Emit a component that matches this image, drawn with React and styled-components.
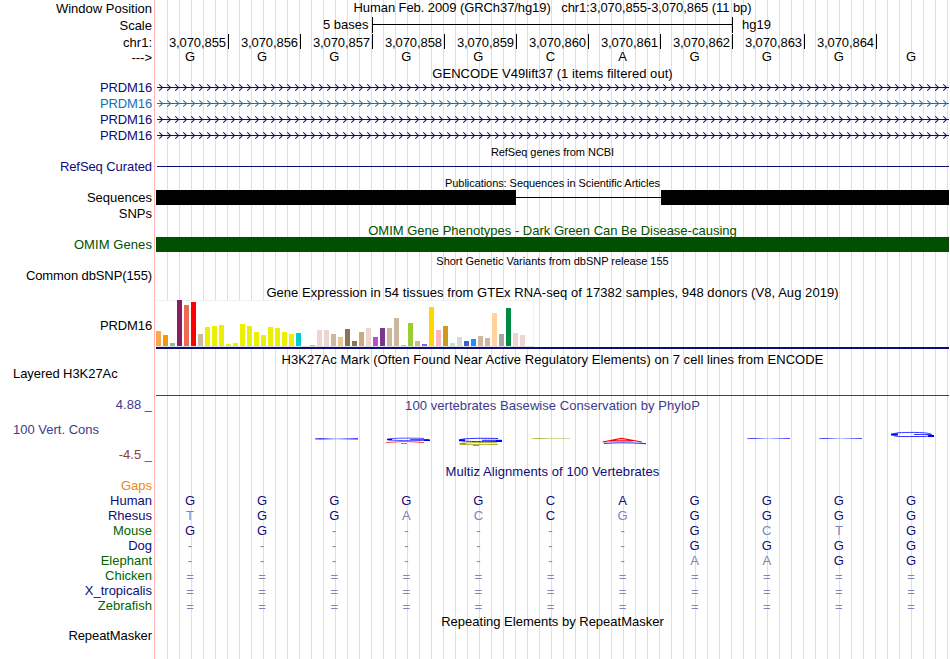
import React from 'react';
import styled, { createGlobalStyle } from 'styled-components';

const NAVY = '#0c0c78';
const BLUE = '#1470b4';
const GREEN = '#005000';
const SLATE = '#3c3c8c';

const positions = [855, 856, 857, 858, 859, 860, 861, 862, 863, 864];

const genes = [
    { name: 'PRDM16', color: NAVY },
    { name: 'PRDM16', color: BLUE },
    { name: 'PRDM16', color: NAVY },
    { name: 'PRDM16', color: NAVY },
];

// [color, height] for every GTEx tissue, in track order
const tissues = [
    ['#ffa54f', 15], ['#ee9a00', 11], ['#8fbc8f', 3], ['#8b1c62', 46],
    ['#ee6a50', 41], ['#ff0000', 44], ['#cdb79e', 12], ['#eeee00', 19],
    ['#eeee00', 20], ['#eeee00', 21], ['#eeee00', 2], ['#eeee00', 3],
    ['#eeee00', 22], ['#eeee00', 20], ['#eeee00', 14], ['#eeee00', 11],
    ['#eeee00', 19], ['#eeee00', 18], ['#eeee00', 14], ['#eeee00', 12],
    ['#00cdcd', 13], ['#ee82ee', 0], ['#9ac0cd', 1], ['#eed5d2', 16],
    ['#eed5d2', 16], ['#cdb79e', 12], ['#eec591', 9], ['#8b7355', 17],
    ['#8b7355', 5], ['#cdaa7d', 14], ['#eed5d2', 18], ['#b452cd', 9],
    ['#7a378b', 18], ['#cdb79e', 18], ['#cdb79e', 28], ['#cdb79e', 1],
    ['#9acd32', 23], ['#cdb79e', 5], ['#7a67ee', 2], ['#ffd700', 39],
    ['#ffb6c1', 16], ['#cd9b1d', 20], ['#b4eeb4', 3], ['#d9d9d9', 9],
    ['#3a5fcd', 5], ['#1e90ff', 7], ['#cdb79e', 10], ['#cdb79e', 8],
    ['#ffd39b', 33], ['#a6a6a6', 12], ['#008b45', 38], ['#eed5d2', 13],
    ['#eed5d2', 11], ['#ff00ff', 0],
];

// lower case marks a base that differs from human and is drawn faint
const species = [
    { name: 'Human', color: NAVY, bases: 'GGGGGCAGGGG' },
    { name: 'Rhesus', color: NAVY, bases: 'tGGacCgGGGG' },
    { name: 'Mouse', color: '#006400', bases: 'GG-----GctG' },
    { name: 'Dog', color: NAVY, bases: '-------GGGG' },
    { name: 'Elephant', color: '#006400', bases: '-------aaGG' },
    { name: 'Chicken', color: '#006400', bases: '===========' },
    { name: 'X_tropicalis', color: NAVY, bases: '===========' },
    { name: 'Zebrafish', color: '#006400', bases: '===========' },
];

const TrackRow = ({
    label,
    color,
    height = 16,
    labelTop = 0,
    labelSpacing,
    children,
}) => (
    <Row $height={height}>
        <Label $color={color} $top={labelTop} $spacing={labelSpacing}>
            {label}
        </Label>
        <Track>{children}</Track>
    </Row>
);

const TitleRow = ({ height = 15, top, color, small, spacing, children }) => (
    <TrackRow height={height}>
        <Title $top={top} $color={color} $small={small} $spacing={spacing}>
            {children}
        </Title>
    </TrackRow>
);

const BaseRow = ({ bases, color }) => (
    <Bases>
        {bases.split('').map((base, i) => (
            <Base
                key={i}
                $top={base === '=' ? 1 : 0}
                $color={/[A-Z]/.test(base) ? color : '#8282b4'}>
                {base.toUpperCase()}
            </Base>
        ))}
    </Bases>
);

const Intron = ({ color }) => {
    const arrows = Array.from(
        { length: 99 },
        (_, i) => `M${3.3 + i * 8} 4.3l3.2 3.2l-3.2 3.2`,
    ).join('');

    return (
        <IntronSvg width="793" height="16" viewBox="0 0 793 16">
            <path d="M1 7.5H793" stroke={color} shapeRendering="crispEdges" />
            <path d={arrows} stroke={color} strokeWidth="1.05" fill="none" />
        </IntronSvg>
    );
};

const Logo = () => (
    <LogoSvg width="793" height="50" viewBox="156 413 793 50" fill="none">
        <defs>
            <linearGradient id="fade">
                <stop offset="0" stopColor="#00f" stopOpacity="0.5" />
                <stop offset="0.12" stopColor="#00f" stopOpacity="0.75" />
                <stop offset="0.5" stopColor="#00f" stopOpacity="0.2" />
                <stop offset="1" stopColor="#00f" stopOpacity="0.75" />
            </linearGradient>
            <linearGradient id="olive">
                <stop offset="0" stopColor="#990" stopOpacity="0.2" />
                <stop offset="0.15" stopColor="#990" stopOpacity="0.8" />
                <stop offset="0.5" stopColor="#990" stopOpacity="0.35" />
                <stop offset="1" stopColor="#990" stopOpacity="0.4" />
            </linearGradient>
        </defs>
        <rect x="315" y="438" width="43" height="1.6" fill="url(#fade)" />
        <rect x="747" y="438" width="43" height="1" fill="url(#fade)" />
        <rect x="819" y="438" width="43" height="1" fill="url(#fade)" />
        <rect x="531" y="438" width="39" height="1" fill="url(#olive)" />

        <path d="M424 438.4C406 437.8 389 438.2 388 439.4S412 440.9 429 440.3M410 439.5H429" stroke="#22f" strokeWidth="0.8" />
        <path d="M387 439.5h5M424 440.2h6" stroke="#00f" strokeWidth="1.5" />
        <path d="M386 442.5Q405 440.4 424 442.5" stroke="#f33" strokeWidth="0.9" />
        <path d="M401 443.5h6M473 445.5h6" stroke="#0e0" />

        <path d="M498 438.5C478 438 461 438.4 460 440S484 442 502 441.3M482 440.3H502" stroke="#22f" />
        <path d="M459 440.3h6M496 441h6" stroke="#00f" strokeWidth="2" />
        <path d="M497 442.8C478 442.4 460 442.8 460 443.8S480 444.8 498 444.4" stroke="#990" strokeWidth="0.8" />
        <path d="M459.5 443.7h6" stroke="#990" strokeWidth="1.5" />

        <path d="M602.5 442L621.5 438.4L642 442M610 440.8H633" stroke="#f00" strokeWidth="1.2" />
        <path d="M604 443.4Q622 442 646 443.6" stroke="#33f" strokeWidth="1.1" />

        <path d="M931 434C925 431.8 905 432.4 898 432.8C889 434 893 436.6 900 436.5H925L932 435.5M914 434.5H932" stroke="#22f" strokeWidth="0.9" />
        <path d="M891 434.5h7M928 436h6" stroke="#00f" strokeWidth="2" />
    </LogoSvg>
);

const App = () => (
    <>
        <GlobalStyle />
        <Browser>
            <TrackRow label="Window Position" height={17} labelTop={1}>
                <Title $spacing={-0.08}>
                    Human Feb. 2009 (GRCh37/hg19)&nbsp;&nbsp;
                    chr1:3,070,855-3,070,865 (11 bp)
                </Title>
            </TrackRow>
            <TrackRow label="Scale" height={17} labelTop={1}>
                <Scale>
                    <ScaleText>5 bases</ScaleText>
                    <ScaleBar />
                    <ScaleText>hg19</ScaleText>
                </Scale>
            </TrackRow>
            <TrackRow label="chr1:" height={15} labelTop={1}>
                <Ruler>
                    {positions.map((position) => (
                        <Position key={position}>3,070,{position}</Position>
                    ))}
                </Ruler>
            </TrackRow>
            <TrackRow label="--->" height={15} labelTop={1}>
                <BaseRow bases="GGGGGCAGGGG" color="#000" />
            </TrackRow>

            <TitleRow height={16} top={2} spacing={0.05}>
                GENCODE V49lift37 (1 items filtered out)
            </TitleRow>
            {genes.map((gene, i) => (
                <TrackRow
                    key={i}
                    label={gene.name}
                    color={gene.color}
                    labelSpacing={-0.14}>
                    <Intron color={gene.color} />
                </TrackRow>
            ))}

            <TitleRow small top={1} spacing={-0.04}>
                RefSeq genes from NCBI
            </TitleRow>
            <TrackRow
                label="RefSeq Curated"
                color={NAVY}
                height={15}
                labelSpacing={-0.08}>
                <Line $top={7} $left={1} $color={NAVY} />
            </TrackRow>

            <TitleRow small height={16} top={2} spacing={-0.06}>
                Publications: Sequences in Scientific Articles
            </TitleRow>
            <TrackRow label="Sequences">
                <Blocks>
                    <Block $width={360} />
                    <Gap />
                    <Block $width={288} />
                </Blocks>
            </TrackRow>
            <TrackRow label="SNPs" />

            <TitleRow color={GREEN} top={1}>
                OMIM Gene Phenotypes - Dark Green Can Be Disease-causing
            </TitleRow>
            <TrackRow label="OMIM Genes" color={GREEN} labelSpacing={0.08}>
                <Block $width={793} $color={GREEN} />
            </TrackRow>

            <TitleRow small top={1} spacing={-0.02}>
                Short Genetic Variants from dbSNP release 155
            </TitleRow>
            <TrackRow label="Common dbSNP(155)" labelSpacing={-0.11} />

            <TitleRow height={16} top={1} spacing={0.055}>
                Gene Expression in 54 tissues from GTEx RNA-seq of 17382
                samples, 948 donors (V8, Aug 2019)
            </TitleRow>
            <TrackRow
                label="PRDM16"
                height={49}
                labelTop={18}
                labelSpacing={-0.14}>
                <Tissues>
                    {tissues.map(([color, height], i) => (
                        <Bar key={i} style={{ height, background: color }} />
                    ))}
                </Tissues>
                <GeneLine />
            </TrackRow>

            <TitleRow height={17} top={3} spacing={0.05}>
                H3K27Ac Mark (Often Found Near Active Regulatory Elements) on 7
                cell lines from ENCODE
            </TitleRow>
            <Row $height={31}>
                <Label $left $spacing={-0.06}>
                    Layered H3K27Ac
                </Label>
                <Track>
                    <Line $top={29} $color={SLATE} />
                </Track>
            </Row>

            <Row $height={67}>
                <Limits>
                    <Limit $color={SLATE}>4.88 _</Limit>
                    <Limit $color={SLATE} $left>
                        100 Vert. Cons
                    </Limit>
                    <Limit $color="#8c3c3c">-4.5 _</Limit>
                </Limits>
                <Track>
                    <Title $color={SLATE} $top={1} $spacing={0.06}>
                        100 vertebrates Basewise Conservation by PhyloP
                    </Title>
                    <Logo />
                </Track>
            </Row>

            <TitleRow height={14} color={NAVY} spacing={0.08}>
                Multiz Alignments of 100 Vertebrates
            </TitleRow>
            <TrackRow label="Gaps" color="#e68c0a" height={15} />
            {species.map(({ name, color, bases }) => (
                <TrackRow key={name} label={name} color={color} height={15}>
                    <BaseRow bases={bases} color={NAVY} />
                </TrackRow>
            ))}

            <TitleRow top={1}>Repeating Elements by RepeatMasker</TitleRow>
            <TrackRow label="RepeatMasker" height={31} labelSpacing={-0.08} />
        </Browser>
    </>
);

export default App;

const GlobalStyle = createGlobalStyle`
    body {
        margin: 0;
        background: #fff;
        overflow: hidden;
    }
`;

const Browser = styled.main`
    width: 949px;
    height: 659px;
    font: 13px/15px 'Liberation Sans', Arial, sans-serif;
    color: #000;
    white-space: nowrap;
    background:
        linear-gradient(#ffb4b4, #ffb4b4) 154px 0 / 1px 100% no-repeat,
        repeating-linear-gradient(
                90deg,
                #dcdcf8 0 1px,
                transparent 1px 12px
            )
            167px 0 no-repeat;
`;

const Row = styled.div`
    display: flex;
    height: ${(props) => props.$height}px;
`;

const Label = styled.div`
    box-sizing: border-box;
    flex: 0 0 156px;
    padding: ${(props) => props.$top || 0}px 4px 0 13px;
    text-align: ${(props) => (props.$left ? 'left' : 'right')};
    letter-spacing: ${(props) => props.$spacing || 0}px;
    color: ${(props) => props.$color || '#000'};
`;

const Track = styled.div`
    flex: 0 0 793px;
    min-width: 0;
`;

const Title = styled.div`
    padding-top: ${(props) => props.$top || 0}px;
    text-align: center;
    font-size: ${(props) => (props.$small ? 11 : 13)}px;
    letter-spacing: ${(props) => props.$spacing || 0}px;
    color: ${(props) => props.$color || '#000'};
`;

const Scale = styled.div`
    display: flex;
    padding-left: 167px;
`;

const ScaleText = styled.span`
    flex: 0 0 46px;
`;

const ScaleBar = styled.div`
    box-sizing: border-box;
    width: 361px;
    height: 16px;
    margin: 0 9px 0 3px;
    border: solid #000;
    border-width: 0 1px;
    background: linear-gradient(#000, #000) 0 7px / 100% 1px no-repeat;
`;

const Ruler = styled.div`
    display: flex;
    padding-left: 1px;
`;

const Position = styled.div`
    box-sizing: border-box;
    width: 72px;
    height: 15px;
    padding: 1px 2px 0 0;
    border-right: 1px solid #000;
    text-align: right;
    letter-spacing: -0.08px;
`;

const Bases = styled.div`
    display: grid;
    grid-template-columns: repeat(11, 1fr);
`;

const Base = styled.span`
    padding: ${(props) => props.$top}px 4px 0 0;
    text-align: center;
    color: ${(props) => props.$color};
`;

const IntronSvg = styled.svg`
    display: block;
`;

const Line = styled.div`
    height: 1px;
    margin-left: ${(props) => props.$left || 0}px;
    background: ${(props) => props.$color};
    transform: translateY(${(props) => props.$top}px);
`;

const Blocks = styled.div`
    display: flex;
    align-items: center;
`;

const Block = styled.div`
    width: ${(props) => props.$width}px;
    height: 15px;
    background: ${(props) => props.$color || '#000'};
`;

const Gap = styled.div`
    flex: 1;
    height: 1px;
    background: #000;
`;

const Tissues = styled.div`
    box-sizing: border-box;
    display: flex;
    align-items: flex-end;
    gap: 2px;
    width: 378px;
    height: 47px;
    border-bottom: 1px solid #e0e0e0;
    background: #fff;
    box-shadow: inset 0 1px #f2f2f2, inset -1px 0 #f2f2f2;
`;

const Bar = styled.div`
    width: 5px;
`;

const GeneLine = styled.div`
    height: 2px;
    background: ${NAVY};
`;

const Limits = styled.div`
    flex: 0 0 156px;
`;

const Limit = styled.div`
    height: 25px;
    padding: 0 4px 0 13px;
    text-align: ${(props) => (props.$left ? 'left' : 'right')};
    color: ${(props) => props.$color};
`;

const LogoSvg = styled.svg`
    display: block;
`;
